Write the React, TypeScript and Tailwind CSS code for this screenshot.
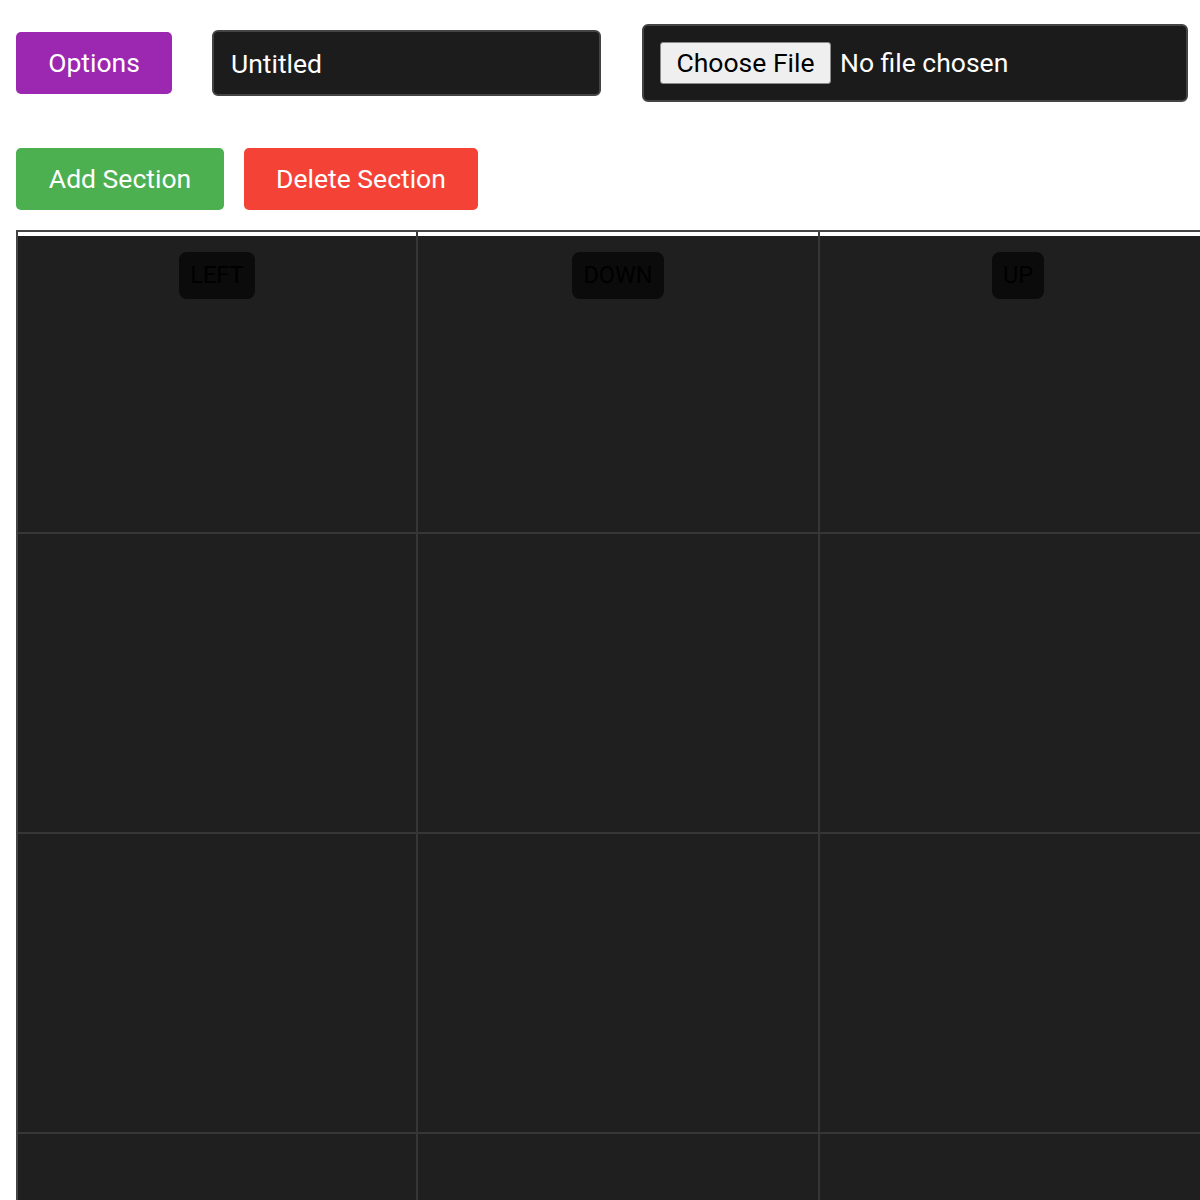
import { useState } from "react"

const lanes = [
  { name: "LEFT", width: "w-[400px]" },
  { name: "DOWN", width: "w-[402px]" },
  { name: "UP", width: "w-[398px]" },
  { name: "RIGHT", width: "w-[400px]" },
]
const rowCount = 6

export default function App() {
  const [title, setTitle] = useState("Untitled")

  return (
    <div className="min-h-screen bg-white pt-6 pl-4 font-['Roboto','Liberation_Sans',sans-serif] text-[26.5px]">
      <div className="flex items-center gap-10">
        <button className="h-[62px] w-[156px] rounded-[5px] bg-[#9c27b0] text-white">
          Options
        </button>
        <input
          value={title}
          onChange={(e) => setTitle(e.target.value)}
          className="h-[66px] w-[389px] rounded-md border-2 border-[#444] bg-[#1c1c1c] px-[17px] text-white outline-none"
        />
        <label className="ml-px flex h-[78px] w-[546px] items-center rounded-md border-2 border-[#444] bg-[#1b1b1b] p-4 text-white">
          <span className="flex h-[42px] w-[171px] items-center justify-center rounded-[3px] border border-[#8a8a8a] bg-[#efefef] text-black">
            Choose File
          </span>
          <span className="ml-[9px]">No file chosen</span>
          <input type="file" className="hidden" />
        </label>
      </div>

      <div className="mt-[46px] flex gap-5">
        <button className="h-[62px] w-[208px] rounded-[5px] bg-[#4caf50] text-white">
          Add Section
        </button>
        <button className="h-[62px] w-[234px] rounded-[5px] bg-[#f44336] text-white">
          Delete Section
        </button>
      </div>

      <div className="mt-5 w-max border-l-2 border-t-2 border-[#444]">
        <div className="flex h-1">
          {lanes.map((lane) => (
            <div key={lane.name} className={`${lane.width} border-r-2 border-[#3a3a3a]`} />
          ))}
        </div>
        {Array.from({ length: rowCount }).map((_, row) => (
          <div key={row} className="flex">
            {lanes.map((lane) => (
              <div
                key={lane.name}
                className={
                  row === 0
                    ? `${lane.width} flex h-[298px] justify-center border-b-2 border-r-2 border-[#363636] bg-[#1f1f1f] pt-4`
                    : `${lane.width} h-[300px] border-b-2 border-r-2 border-[#363636] bg-[#1f1f1f]`
                }
              >
                {row === 0 && (
                  <span className="h-fit rounded-lg bg-[#0b0b0b] px-[11px] py-[10px] text-[23.5px] leading-[27px] text-black">
                    {lane.name}
                  </span>
                )}
              </div>
            ))}
          </div>
        ))}
      </div>
    </div>
  )
}
